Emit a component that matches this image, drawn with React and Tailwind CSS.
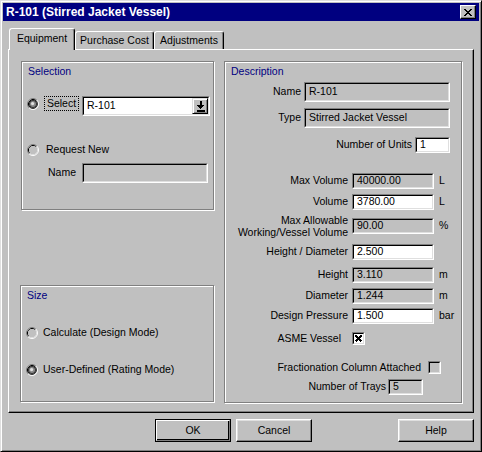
import React from "react";

const Sunken = ({ white, className = "", children }) => (
  <div
    className={`border border-t-[#808080] border-l-[#808080] border-r-white border-b-white ${className}`}
  >
    <div
      className={`h-full w-full border border-t-black border-l-black border-r-[#dfdfdf] border-b-[#dfdfdf] flex items-center pl-[3px] whitespace-nowrap overflow-hidden ${
        white ? "bg-white" : "bg-[#c0c0c0]"
      }`}
    >
      {children}
    </div>
  </div>
);

// win95 style radio, drawn as two-tone arcs
const Radio = ({ checked }) => (
  <svg width="12" height="12" viewBox="0 0 12 12" className="shrink-0">
    <path d="M2.11 9.89 A5.5 5.5 0 0 1 9.89 2.11" stroke="#808080" strokeWidth="1" fill="none" />
    <path d="M9.89 2.11 A5.5 5.5 0 0 1 2.11 9.89" stroke="#ffffff" strokeWidth="1" fill="none" />
    <path d="M2.82 9.18 A4.5 4.5 0 0 1 9.18 2.82" stroke={checked ? "#000" : "#000"} strokeWidth="1" fill="none" />
    <path d="M9.18 2.82 A4.5 4.5 0 0 1 2.82 9.18" stroke={checked ? "#404040" : "#dfdfdf"} strokeWidth="1" fill="none" />
    {checked ? (
      <>
        <circle cx="6" cy="6" r="4" fill="#303030" />
        <circle cx="6" cy="6" r="3" fill="#8a8a8a" />
        <circle cx="5.6" cy="5.6" r="1.6" fill="#e0e0e0" />
      </>
    ) : (
      <circle cx="6" cy="6" r="4" fill="#c0c0c0" />
    )}
  </svg>
);

const Check = ({ checked, disabled }) => (
  <div className="w-[13px] h-[13px] shrink-0 border border-t-[#808080] border-l-[#808080] border-r-white border-b-white">
    <div
      className={`w-full h-full border border-t-black border-l-black border-r-[#dfdfdf] border-b-[#dfdfdf] flex items-center justify-center ${
        disabled ? "bg-[#c0c0c0]" : "bg-white"
      }`}
    >
      {checked && (
        <svg width="7" height="7" viewBox="0 0 7 7" shapeRendering="crispEdges">
          <path d="M0.5 0.5 L6.5 6.5 M6.5 0.5 L0.5 6.5" stroke="black" strokeWidth="2" />
        </svg>
      )}
    </div>
  </div>
);

const Group = ({ title, className = "", children }) => (
  <div
    className={`border border-[#808080] shadow-[inset_1px_1px_#fff,1px_1px_#fff] ${className}`}
  >
    <div className="h-[14px] leading-[14px] mt-[2px] pl-[6px] text-[#000080]">{title}</div>
    {children}
  </div>
);

const Button = ({ children, isDefault }) =>
  isDefault ? (
    <div className="w-[76px] h-[23px] border border-black">
      <div className="w-full h-full border border-t-white border-l-white border-r-[#808080] border-b-[#808080] shadow-[inset_-1px_-1px_#000] flex items-center justify-center">
        {children}
      </div>
    </div>
  ) : (
    <div className="w-[76px] h-[23px] border border-t-white border-l-white border-r-black border-b-black shadow-[inset_-1px_-1px_#808080,inset_1px_1px_#dfdfdf] flex items-center justify-center">
      {children}
    </div>
  );

export default function App() {
  return (
    <div className="w-[482px] h-[452px] bg-[#c0c0c0] border border-t-[#dfdfdf] border-l-[#dfdfdf] border-r-black border-b-black shadow-[inset_1px_1px_#fff,inset_-1px_-1px_#808080] p-[2px] flex flex-col font-['Liberation_Sans',Arial,sans-serif] text-[10.5px] text-black select-none">
      {/* Title bar */}
      <div className="h-[18px] shrink-0 bg-[#000080] flex items-center justify-between">
        <span className="pl-[3px] text-white font-bold text-[12px] leading-none">
          R-101 (Stirred Jacket Vessel)
        </span>
        <div className="mr-[3px] w-[16px] h-[14px] border border-t-white border-l-white border-r-black border-b-black shadow-[inset_-1px_-1px_#808080] bg-[#c0c0c0] flex items-center justify-center">
          <svg width="8" height="7" viewBox="0 0 8 7" shapeRendering="crispEdges">
            <path d="M0.5 0 L7.5 7 M7.5 0 L0.5 7" stroke="black" strokeWidth="1.6" />
          </svg>
        </div>
      </div>

      {/* Tabs */}
      <div className="mt-[7px] h-[21px] shrink-0 pl-[6px] flex items-end">
        <div className="relative z-10 -mb-px w-[66px] h-[22px] bg-[#c0c0c0] rounded-t-[3px] border-t border-l border-r border-t-white border-l-white border-r-black shadow-[inset_-1px_0_#808080] flex items-center justify-center pb-[2px]">
          Equipment
        </div>
        <div className="w-[79px] h-[18px] rounded-t-[3px] border-t border-l border-r border-t-white border-l-white border-r-black shadow-[inset_-1px_0_#808080] flex items-center justify-center">
          Purchase Cost
        </div>
        <div className="w-[70px] h-[18px] rounded-t-[3px] border-t border-l border-r border-t-white border-l-white border-r-black shadow-[inset_-1px_0_#808080] flex items-center justify-center">
          Adjustments
        </div>
      </div>

      {/* Tab panel */}
      <div className="mx-[5px] h-[364px] shrink-0 border border-t-white border-l-white border-r-black border-b-black shadow-[inset_-1px_-1px_#808080] pt-[11px] pl-[12px] flex gap-[10px]">
        {/* Left column */}
        <div className="w-[193px] h-[342px] flex flex-col justify-between">
          <Group title="Selection" className="h-[149px]">
            <div className="mt-[18px] h-[20px] flex items-start pl-[5px]">
              <div className="mt-[2px]">
                <Radio checked />
              </div>
              <div className="ml-[5px] h-[15px] w-[35px] border border-dotted border-black flex items-center justify-center">
                Select
              </div>
              <div className="ml-[3px] w-[128px] h-[20px] border border-t-[#808080] border-l-[#808080] border-r-white border-b-white">
                <div className="w-full h-full border border-t-black border-l-black border-r-[#dfdfdf] border-b-[#dfdfdf] bg-white flex items-center">
                  <span className="flex-1 pl-[3px]">R-101</span>
                  <div className="w-[16px] h-full border border-t-[#dfdfdf] border-l-[#dfdfdf] border-r-black border-b-black shadow-[inset_1px_1px_#fff,inset_-1px_-1px_#808080] bg-[#c0c0c0] flex items-center justify-center">
                    <svg width="9" height="11" viewBox="0 0 9 11" shapeRendering="crispEdges">
                      <rect x="3.5" y="0" width="2" height="4" fill="black" />
                      <polygon points="0.5,4 8.5,4 4.5,8" fill="black" />
                      <rect x="0.5" y="9" width="8" height="1.5" fill="black" />
                    </svg>
                  </div>
                </div>
              </div>
            </div>
            <div className="mt-[27px] h-[14px] flex items-center pl-[5px]">
              <Radio />
              <span className="ml-[7px]">Request New</span>
            </div>
            <div className="mt-[6px] h-[20px] flex items-center pl-[26px]">
              <span className="w-[34px]">Name</span>
              <Sunken className="w-[126px] h-[20px]" />
            </div>
          </Group>

          <Group title="Size" className="h-[117px] mb-[1px] -ml-px">
            <div className="mt-[24px] h-[14px] flex items-center pl-[5px]">
              <Radio />
              <span className="ml-[5px]">Calculate (Design Mode)</span>
            </div>
            <div className="mt-[23px] h-[14px] flex items-center pl-[5px]">
              <Radio checked />
              <span className="ml-[5px]">User-Defined (Rating Mode)</span>
            </div>
          </Group>
        </div>

        {/* Description */}
        <Group title="Description" className="w-[238px] h-[342px]">
          <div className="mt-[4px] h-[20px] flex items-center">
            <span className="w-[76px] text-right">Name</span>
            <Sunken className="ml-[3px] w-[146px] h-[20px]">R-101</Sunken>
          </div>
          <div className="mt-[6px] h-[20px] flex items-center">
            <span className="w-[76px] text-right">Type</span>
            <Sunken className="ml-[3px] w-[146px] h-[20px]">Stirred Jacket Vessel</Sunken>
          </div>
          <div className="mt-[9px] h-[16px] flex items-center">
            <span className="w-[187px] text-right">Number of Units</span>
            <Sunken white className="ml-[3px] w-[35px] h-[16px]">1</Sunken>
          </div>

          <div className="mt-[20px] h-[16px] flex items-center">
            <span className="w-[123px] text-right">Max Volume</span>
            <Sunken className="ml-[4px] w-[82px] h-[16px]">40000.00</Sunken>
            <span className="ml-[5px]">L</span>
          </div>
          <div className="mt-[5px] h-[16px] flex items-center">
            <span className="w-[123px] text-right">Volume</span>
            <Sunken white className="ml-[4px] w-[82px] h-[16px]">3780.00</Sunken>
            <span className="ml-[5px]">L</span>
          </div>
          <div className="mt-[8px] h-[16px] flex items-center">
            <span className="w-[123px] text-right leading-[12px] whitespace-nowrap">
              Max Allowable
              <br />
              Working/Vessel Volume
            </span>
            <Sunken className="ml-[4px] w-[82px] h-[16px]">90.00</Sunken>
            <span className="ml-[5px]">%</span>
          </div>
          <div className="mt-[10px] h-[16px] flex items-center">
            <span className="w-[123px] text-right">Height / Diameter</span>
            <Sunken white className="ml-[4px] w-[82px] h-[16px]">2.500</Sunken>
          </div>
          <div className="mt-[7px] h-[16px] flex items-center">
            <span className="w-[123px] text-right">Height</span>
            <Sunken className="ml-[4px] w-[82px] h-[16px]">3.110</Sunken>
            <span className="ml-[5px]">m</span>
          </div>
          <div className="mt-[5px] h-[16px] flex items-center">
            <span className="w-[123px] text-right">Diameter</span>
            <Sunken className="ml-[4px] w-[82px] h-[16px]">1.244</Sunken>
            <span className="ml-[5px]">m</span>
          </div>
          <div className="mt-[4px] h-[16px] flex items-center">
            <span className="w-[123px] text-right">Design Pressure</span>
            <Sunken white className="ml-[4px] w-[82px] h-[16px]">1.500</Sunken>
            <span className="ml-[5px]">bar</span>
          </div>
          <div className="mt-[8px] h-[13px] flex items-center">
            <span className="w-[116px] text-right">ASME Vessel</span>
            <div className="ml-[11px]">
              <Check checked />
            </div>
          </div>
          <div className="mt-[16px] h-[13px] flex items-center">
            <span className="w-[196px] text-right">Fractionation Column Attached</span>
            <div className="ml-[7px]">
              <Check disabled />
            </div>
          </div>
          <div className="mt-[5px] h-[16px] flex items-center">
            <span className="w-[161px] text-right">Number of Trays</span>
            <Sunken className="ml-[2px] w-[35px] h-[16px]">5</Sunken>
          </div>
        </Group>
      </div>

      {/* Buttons */}
      <div className="mt-[6px] h-[23px] shrink-0 pl-[152px] pr-[5px] flex items-center">
        <Button isDefault>OK</Button>
        <div className="ml-[5px]">
          <Button>Cancel</Button>
        </div>
        <div className="ml-auto">
          <Button>Help</Button>
        </div>
      </div>
    </div>
  );
}
